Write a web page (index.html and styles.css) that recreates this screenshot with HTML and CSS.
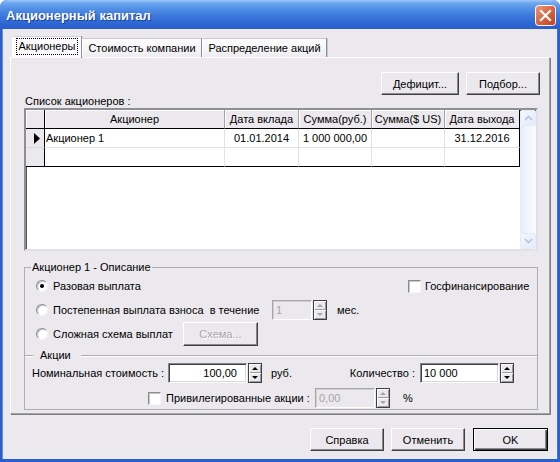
FILE: index.html
```html
<!DOCTYPE html>
<html>
<head>
<meta charset="utf-8">
<link rel="stylesheet" href="styles.css">
</head>
<body>
<div class="window">
  <div class="titlebar">
    <span class="title">Акционерный капитал</span>
    <div class="close">
      <svg width="21" height="21" viewBox="0 0 21 21">
        <defs>
          <linearGradient id="cg" x1="0" y1="0" x2="1" y2="1">
            <stop offset="0" stop-color="#ee9a7c"/>
            <stop offset="0.45" stop-color="#dc6a47"/>
            <stop offset="1" stop-color="#c03d1c"/>
          </linearGradient>
        </defs>
        <rect x="0.5" y="0.5" width="20" height="20" rx="3" fill="url(#cg)" stroke="#fff"/>
        <path d="M6 6 L15 15 M15 6 L6 15" stroke="#fff" stroke-width="2.2" stroke-linecap="square"/>
      </svg>
    </div>
  </div>
  <div class="client">
    <div class="tabs">
      <div class="tab sel t1"><span class="focus">Акционеры</span></div>
      <div class="tab t2">Стоимость компании</div>
      <div class="tab t3">Распределение акций</div>
    </div>
    <div class="panel">
      <div class="toprow">
        <div class="btn w78">Дефицит...</div>
        <div class="btn w74">Подбор...</div>
      </div>
      <div class="lbl">Список акционеров :</div>
      <div class="gridbox">
        <div class="grid">
          <div class="h ind"></div>
          <div class="h">Акционер</div>
          <div class="h">Дата вклада</div>
          <div class="h">Сумма(руб.)</div>
          <div class="h">Сумма($ US)</div>
          <div class="h last">Дата выхода</div>

          <div class="c ind"><svg width="7" height="11" viewBox="0 0 7 11"><path d="M1 0 L7 5.5 L1 11 Z" fill="#000"/></svg></div>
          <div class="c left">Акционер 1</div>
          <div class="c">01.01.2014</div>
          <div class="c">1 000 000,00</div>
          <div class="c"></div>
          <div class="c last">31.12.2016</div>

          <div class="c ind r2"></div>
          <div class="c r2"></div>
          <div class="c r2"></div>
          <div class="c r2"></div>
          <div class="c r2"></div>
          <div class="c last r2"></div>
        </div>
        <div class="vscroll">
          <div class="sbtn"><svg width="9" height="6" viewBox="0 0 9 6"><path d="M1 5 L4.5 1.5 L8 5" fill="none" stroke="#b3c3e4" stroke-width="1.6"/></svg></div>
          <div class="track"></div>
          <div class="sbtn"><svg width="9" height="6" viewBox="0 0 9 6"><path d="M1 1 L4.5 4.5 L8 1" fill="none" stroke="#b3c3e4" stroke-width="1.6"/></svg></div>
        </div>
      </div>
      <fieldset class="group">
        <legend>Акционер 1 - Описание</legend>
        <div class="row r1">
          <span class="radio on"></span>
          <span class="rtext w355">Разовая выплата</span>
          <span class="check"></span>
          <span class="ctext">Госфинансирование</span>
        </div>
        <div class="row r2row">
          <span class="radio"></span>
          <span class="rtext w219">Постепенная выплата взноса&nbsp; в течение</span>
          <div class="edit dis w40">1</div>
          <div class="spin dis"><span class="up"><i></i></span><span class="dn"><i></i></span></div>
          <span class="unit10">мес.</span>
        </div>
        <div class="row r3row">
          <span class="radio"></span>
          <span class="rtext w130">Сложная схема выплат</span>
          <div class="btn w75 h24 disabled">Схема...</div>
        </div>
        <div class="sep"><span class="ln short"></span><span class="septext">Акции</span><span class="ln long"></span></div>
        <div class="row r4row">
          <span class="l136">Номинальная стоимость :</span>
          <div class="edit w79 right">100,00</div>
          <div class="spin"><span class="up"><i></i></span><span class="dn"><i></i></span></div>
          <span class="unit69">руб.</span>
          <span class="l80">Количество :</span>
          <div class="edit w79">10 000</div>
          <div class="spin"><span class="up"><i></i></span><span class="dn"><i></i></span></div>
        </div>
        <div class="row r5row">
          <span class="check"></span>
          <span class="l149">Привилегированные акции :</span>
          <div class="edit dis w60">0,00</div>
          <div class="spin dis"><span class="up"><i></i></span><span class="dn"><i></i></span></div>
          <span class="pct">%</span>
        </div>
      </fieldset>
    </div>
    <div class="bottom">
      <div class="btn w74">Справка</div>
      <div class="btn w74">Отменить</div>
      <div class="btn w75 def">OK</div>
    </div>
  </div>
</div>
</body>
</html>
```
FILE: styles.css
```css
* { box-sizing: border-box; }
html, body { margin: 0; padding: 0; }
body {
  width: 560px; height: 462px; overflow: hidden;
  background: #fff;
  font-family: "Liberation Sans", Arial, sans-serif;
  font-size: 11px; color: #000;
}
.window {
  width: 560px; height: 462px;
  display: flex; flex-direction: column;
  border-radius: 7px 7px 0 0;
  overflow: hidden;
  background: #2a5fcf;
}
.titlebar {
  height: 29px; flex: none;
  display: flex; align-items: center;
  padding: 0 4px 0 6px;
  background: linear-gradient(180deg, #9cc7f6 0%, #6ea8ef 10%, #528fe6 30%, #3b78dc 55%, #2e67d3 80%, #2a5ecb 100%);
}
.title {
  flex: 1;
  color: #fff; font-weight: bold; font-size: 13px;
  text-shadow: 1px 1px 0 #1a3f9a;
  padding-top: 1px;
}
.close { width: 21px; height: 21px; margin-top: 1px; }
.close svg { display: block; }

.client {
  flex: 1;
  margin: 0 3px 3px 3px;
  background: #ebe9ed;
  padding-top: 7px;
  display: flex; flex-direction: column;
  box-shadow: -1px 0 0 #5c8fe8, 1px 0 0 #3f73d9;
}

/* tabs */
.tabs {
  display: flex; align-items: flex-end;
  height: 22px; margin-left: 9px; margin-bottom: -1px;
  position: relative; z-index: 1;
}
.tab {
  height: 19px; margin-bottom: 1px;
  display: flex; align-items: center; justify-content: center;
  background: linear-gradient(180deg, #fdfdfe 0%, #f4f3f6 70%, #ecebef 100%);
  border-top: 1px solid #c9c8cf;
  border-left: 1px solid #fff;
  border-right: 1px solid #8e8e92;
  box-shadow: 1px 0 0 #c8c8cc;
  padding-bottom: 1px;
}
.tab.sel {
  height: 22px; margin-bottom: 0;
  background: #fbfbfd;
  border-top: 1px solid #d4d3d9;
  padding-bottom: 2px;
}
.t1 { width: 70px; }
.t2 { width: 120px; margin-left: 0; }
.t3 { width: 125px; }
.focus {
  border: 1px dotted #000;
  padding: 1px 2px;
  line-height: 13px;
}

/* panel */
.panel {
  margin-left: 7px;
  width: 540px; height: 357px;
  border-top: 1px solid #fff;
  border-left: 1px solid #fff;
  border-right: 1px solid #a3a3a7;
  border-bottom: 1px solid #a3a3a7;
  box-shadow: 1px 1px 0 #7e7e82;
}
.toprow {
  display: flex; justify-content: flex-end; gap: 7px;
  margin-top: 14px; padding-right: 9px;
}
.btn {
  height: 23px;
  display: flex; align-items: center; justify-content: center;
  background: #ebe9ed;
  border: 1px solid; border-color: #fff #404040 #404040 #fff;
  box-shadow: inset -1px -1px 0 #8a8a8e;
}
.btn.disabled { color: #a6a5aa; text-shadow: 1px 1px 0 #fff; }
.btn.def {
  border: 1px solid #000;
  box-shadow: inset 1px 1px 0 #fff, inset -1px -1px 0 #404040, inset -2px -2px 0 #8a8a8e;
}
.w74 { width: 74px; }
.w75 { width: 75px; }
.w78 { width: 78px; }
.h24 { height: 24px; }

.lbl { height: 13px; line-height: 13px; padding-left: 14px; }

/* grid */
.gridbox {
  margin-left: 13px;
  width: 514px; height: 143px;
  display: flex;
  background: #fff;
  border: 2px solid; border-color: #8f8f93 #e2e2e6 #e2e2e6 #8f8f93;
  box-shadow: inset 1px 1px 0 #555;
}
.grid {
  width: 494px;
  display: grid;
  grid-template-columns: 19px 180px 74px 73px 73px 75px;
  grid-auto-rows: 19px;
  align-content: start;
}
.h {
  background: #ebe9ed;
  border-right: 1px solid #a3a3a7;
  border-bottom: 1px solid #000;
  box-shadow: inset 1px 1px 0 #fff;
  text-align: center; line-height: 18px;
  white-space: nowrap;
}
.h.ind { border-right-color: #000; }
.h.last { border-right-color: #000; }
.c {
  border-right: 1px solid #e2e2e6;
  border-bottom: 1px solid #e2e2e6;
  line-height: 18px; text-align: center;
  white-space: nowrap;
}
.c.left { text-align: left; padding-left: 1px; }
.c.ind {
  background: #ebe9ed; border-right-color: #000;
  border-bottom-color: #d9d8dd;
  display: flex; align-items: center; justify-content: center;
}
.c.ind svg { display: block; margin-left: 2px; }
.c.last { border-right-color: #000; }
.c.r2 { border-bottom-color: #000; }

.vscroll {
  width: 16px; margin-left: 0;
  display: flex; flex-direction: column;
}
.sbtn {
  height: 16px; flex: none;
  display: flex; align-items: center; justify-content: center;
  background: linear-gradient(135deg, #f4f7fe 0%, #e3ebfb 100%);
  border: 1px solid #e3eafa;
  border-radius: 2px;
}
.sbtn svg { display: block; }
.track {
  flex: 1;
  background: linear-gradient(90deg, #e4ecfb 0%, #f4f7fe 60%, #fafbff 100%);
}

/* group */
.group {
  margin: 10px 0 0 13px;
  width: 514px; min-width: 0;
  padding: 0 0 1px 0;
  border: 1px solid #aeadb3;
}
.group legend {
  margin-left: 6px; padding: 0 1px;
  line-height: 13px; height: 13px;
}
.row { display: flex; align-items: center; white-space: nowrap; }
.r1 { height: 12px; margin-top: 6px; padding-left: 11px; }
.r2row { height: 20px; margin-top: 8px; padding-left: 11px; }
.r3row { height: 24px; margin-top: 2px; padding-left: 11px; }
.r4row { height: 20px; margin-top: 1px; padding-left: 7px; }
.r5row { height: 20px; margin-top: 5px; padding-left: 123px; }

.radio {
  width: 12px; height: 12px; flex: none;
  border-radius: 50%;
  background: #fff;
  border: 1px solid; border-color: #8c8c90 #f3f3f5 #f3f3f5 #8c8c90;
  box-shadow: inset 1px 1px 0 #c4c4c8;
  position: relative;
}
.radio.on::after {
  content: ""; position: absolute;
  left: 3px; top: 3px; width: 4px; height: 4px;
  border-radius: 50%; background: #000;
}
.rtext { margin-left: 5px; }
.w355 { width: 355px; }
.w219 { width: 219px; }
.w130 { width: 130px; }
.check {
  width: 13px; height: 13px; flex: none;
  background: #fff;
  border: 1px solid; border-color: #8c8c90 #f6f6f8 #f6f6f8 #8c8c90;
  box-shadow: inset 1px 1px 0 #c4c4c8;
}
.ctext { margin-left: 4px; }

.edit {
  height: 20px; flex: none;
  background: #fff;
  border: 1px solid; border-color: #86868a #fff #fff #86868a;
  box-shadow: inset 1px 1px 0 #404040, inset -1px -1px 0 #d8d7dc;
  line-height: 18px;
  padding: 0 3px;
  overflow: hidden;
}
.edit.right { text-align: right; padding-right: 9px; }
.edit.dis {
  background: #ebe9ed; color: #a6a5aa;
  border-color: #a6a5aa #fff #fff #a6a5aa;
  box-shadow: inset 1px 1px 0 #d0cfd4;
}
.w40 { width: 40px; }
.w60 { width: 60px; }
.w79 { width: 79px; }

.spin {
  width: 14px; height: 20px; flex: none;
  margin-left: 1px;
  display: flex; flex-direction: column;
  border: 1px solid #404040;
}
.spin span {
  flex: 1;
  display: flex; align-items: center; justify-content: center;
  background: #ebe9ed;
  box-shadow: inset 1px 1px 0 #fff, inset -1px -1px 0 #9a9a9e;
}
.spin i { display: block; width: 0; height: 0; border-left: 3px solid transparent; border-right: 3px solid transparent; }
.spin .up i { border-bottom: 3px solid #000; }
.spin .dn i { border-top: 3px solid #000; }
.spin.dis .up i { border-bottom-color: #a6a5aa; }
.spin.dis .dn i { border-top-color: #a6a5aa; }

.unit10 { margin-left: 10px; }
.sep {
  display: flex; align-items: center;
  height: 13px; margin-top: 3px;
}
.ln { height: 2px; border-top: 1px solid #aeadb3; border-bottom: 1px solid #fff; }
.ln.short { width: 8px; }
.ln.long { flex: 1; }
.septext { margin: 0 10px 0 7px; line-height: 13px; }

.l136 { width: 136px; }
.unit69 { width: 69px; margin-left: 9px; }
.l80 { width: 80px; text-align: right; padding-right: 5px; }
.l149 { width: 149px; margin-left: 5px; }
.pct { margin-left: 13px; }

/* bottom */
.bottom {
  display: flex; justify-content: flex-end; gap: 7px;
  margin-top: 14px; padding-right: 9px;
}
.bottom .def { margin-left: 1px; }
```
